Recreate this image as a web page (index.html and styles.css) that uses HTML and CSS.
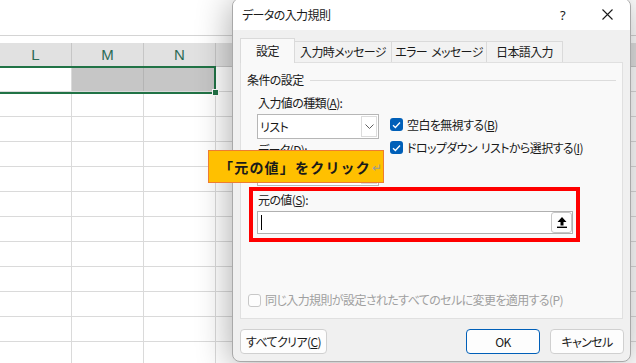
FILE: index.html
```html
<!DOCTYPE html>
<html lang="ja">
<head>
<meta charset="UTF-8">
<meta name="viewport" content="width=device-width, initial-scale=1.0">
<title>データの入力規則</title>
<link rel="stylesheet" href="styles.css">
</head>
<body>

<div class="screen">
  <!-- Excel シート (背景) -->
  <div class="sheet">
    <div class="formula-bar"></div>
    <div class="sheet-row col-head">
      <div class="cell">L</div>
      <div class="cell">M</div>
      <div class="cell">N</div>
      <div class="cell cell-rest"></div>
    </div>
    <div class="sheet-row">
      <div class="cell"></div>
      <div class="cell sel"></div>
      <div class="cell sel"></div>
      <div class="cell cell-rest"></div>
    </div>
    <div class="sheet-row"><div class="cell"></div><div class="cell"></div><div class="cell"></div><div class="cell cell-rest"></div></div>
    <div class="sheet-row"><div class="cell"></div><div class="cell"></div><div class="cell"></div><div class="cell cell-rest"></div></div>
    <div class="sheet-row"><div class="cell"></div><div class="cell"></div><div class="cell"></div><div class="cell cell-rest"></div></div>
    <div class="sheet-row"><div class="cell"></div><div class="cell"></div><div class="cell"></div><div class="cell cell-rest"></div></div>
    <div class="sheet-row"><div class="cell"></div><div class="cell"></div><div class="cell"></div><div class="cell cell-rest"></div></div>
    <div class="sheet-row"><div class="cell"></div><div class="cell"></div><div class="cell"></div><div class="cell cell-rest"></div></div>
    <div class="sheet-row"><div class="cell"></div><div class="cell"></div><div class="cell"></div><div class="cell cell-rest"></div></div>
    <div class="sheet-row"><div class="cell"></div><div class="cell"></div><div class="cell"></div><div class="cell cell-rest"></div></div>
    <div class="sheet-row"><div class="cell"></div><div class="cell"></div><div class="cell"></div><div class="cell cell-rest"></div></div>
    <div class="sheet-row"><div class="cell"></div><div class="cell"></div><div class="cell"></div><div class="cell cell-rest"></div></div>
    <div class="sheet-row"><div class="cell"></div><div class="cell"></div><div class="cell"></div><div class="cell cell-rest"></div></div>

    <div class="selection"><span class="fill-handle"></span></div>
  </div>

  <!-- データの入力規則 ダイアログ -->
  <div class="dialog">
    <div class="titlebar">
      <span class="title">データの入力規則</span>
      <span class="title-btn help">?</span>
      <span class="title-btn">
        <svg width="11" height="11" viewBox="0 0 11 11"><path d="M0.5 0.5 L10.5 10.5 M10.5 0.5 L0.5 10.5" stroke="#1a1a1a" stroke-width="1.1" fill="none"/></svg>
      </span>
    </div>

    <div class="dialog-body">
      <div class="tabs">
        <div class="tab tab-active tab-w1">設定</div>
        <div class="tab tab-w2">入力時メッセージ</div>
        <div class="tab tab-w3">エラー<span class="sp"> </span>メッセージ</div>
        <div class="tab tab-w4">日本語入力</div>
      </div>

      <div class="panel">
        <div class="group-head">条件の設定</div>

        <div class="criteria">
          <div class="crit-left">
            <div class="field-label">入力値の種類(<u>A</u>):</div>
            <div class="combo">
              <span class="combo-text">リスト</span>
              <span class="combo-btn">
                <svg width="9" height="5" viewBox="0 0 9 5"><path d="M0.5 0.5 L4.5 4.5 L8.5 0.5" stroke="#606060" fill="none"/></svg>
              </span>
            </div>
            <div class="field-label label-gap">データ(<u>D</u>):</div>
            <div class="combo">
              <span class="combo-text"></span>
              <span class="combo-btn">
                <svg width="9" height="5" viewBox="0 0 9 5"><path d="M0.5 0.5 L4.5 4.5 L8.5 0.5" stroke="#606060" fill="none"/></svg>
              </span>
            </div>
          </div>
          <div class="crit-right">
            <div class="check-row">
              <span class="checkbox">
                <svg width="9" height="8" viewBox="0 0 9 8"><path d="M1 4.2 L3.4 6.5 L8 1.5" stroke="#fff" stroke-width="1.3" fill="none"/></svg>
              </span>
              <span>空白を無視する(<u>B</u>)</span>
            </div>
            <div class="check-row">
              <span class="checkbox">
                <svg width="9" height="8" viewBox="0 0 9 8"><path d="M1 4.2 L3.4 6.5 L8 1.5" stroke="#fff" stroke-width="1.3" fill="none"/></svg>
              </span>
              <span>ドロップダウン<span class="sp"> </span>リストから選択する(<u>I</u>)</span>
            </div>
          </div>
        </div>

        <div class="source">
          <div class="field-label">元の値(<u>S</u>):</div>
          <div class="source-input">
            <span class="caret"></span>
            <span class="source-space"></span>
            <span class="pick-btn">
              <svg width="10" height="11" viewBox="0 0 10 11"><path d="M5 0 L9.5 5 H6.5 V8.5 H3.5 V5 H0.5 Z" fill="#000"/><rect x="0" y="9.6" width="10" height="1.4" fill="#000"/></svg>
            </span>
          </div>
        </div>

        <div class="apply-row">
          <span class="checkbox checkbox-off"></span>
          <span>同じ入力規則が設定されたすべてのセルに変更を適用する(P)</span>
        </div>

        <div class="red-frame"></div>
      </div>

      <div class="footer">
        <span class="btn btn-clear">すべてクリア(<u>C</u>)</span>
        <span class="footer-space"></span>
        <span class="btn btn-ok">OK</span>
        <span class="btn btn-cancel">キャンセル</span>
      </div>
    </div>
  </div>

  <div class="callout">「元の値」をクリック<span class="para">↵</span></div>
</div>

</body>
</html>
```

FILE: styles.css
```css
* {
  box-sizing: border-box;
}
body {
  margin: 0;
  background-color: #fff;
  font-family: "Noto Sans CJK JP", sans-serif;
  overflow: hidden;
}
.screen {
  position: relative;
  width: 636px;
  height: 363px;
  overflow: hidden;
}

/* シート */
.sheet {
  position: relative;
}
.formula-bar {
  height: 36px;
  border-bottom: 1px solid #d4d4d4;
  margin-bottom: 7px;
}
.sheet-row {
  display: flex;
  height: 25px;
  border-bottom: 1px solid #dadada;
}
.cell {
  flex: none;
  width: 72px;
  border-right: 1px solid #dadada;
}
.cell-rest {
  flex: 1;
  border-right: none;
}
.col-head {
  height: 24px;
  background-color: #e1e1e1;
  border-bottom-color: #c8c8c8;
}
.col-head .cell {
  border-right-color: #c6c6c6;
  text-align: center;
  font-family: "Liberation Sans", sans-serif;
  font-size: 15px;
  line-height: 23px;
  color: #2b6b55;
}
.sel {
  background-color: #c6c6c6;
  border-right-color: #b4b4b4;
}
.selection {
  position: absolute;
  left: -3px;
  top: 66px;
  width: 219px;
  height: 28px;
  border: 2px solid #217346;
}
.fill-handle {
  position: absolute;
  right: -5px;
  bottom: -4px;
  width: 7px;
  height: 7px;
  background-color: #217346;
  border: 1px solid #fff;
}

/* ダイアログ */
.dialog {
  position: absolute;
  left: 232px;
  top: -2px;
  width: 399px;
  height: 364px;
  background-color: #f0f0f0;
  border: 1px solid #a9a9a9;
  border-radius: 8px;
  box-shadow: -2px 3px 34px rgba(0, 0, 0, 0.32);
  display: flex;
  flex-direction: column;
  overflow: hidden;
  font-size: 12px;
  line-height: 16px;
  letter-spacing: -0.6px;
  color: #1a1a1a;
  font-feature-settings: "palt";
}
.sp {
  display: inline-block;
  width: 4px;
}
.titlebar {
  height: 31px;
  background-color: #fff;
  display: flex;
  align-items: center;
  padding-left: 9px;
}
.title {
  flex: 1;
}
.title-btn {
  width: 45px;
  height: 31px;
  display: flex;
  align-items: center;
  justify-content: center;
}
.help {
  font-family: "Noto Sans", sans-serif;
  font-size: 13px;
}
.dialog-body {
  flex: 1;
  padding: 8px 7px 0 7px;
  display: flex;
  flex-direction: column;
}
.tabs {
  display: flex;
  align-items: flex-end;
  height: 24px;
}
.tab {
  height: 21px;
  margin-left: -1px;
  border: 1px solid #dadada;
  border-bottom: none;
  background-color: #f2f2f2;
  display: flex;
  align-items: center;
  justify-content: center;
}
.tab-active {
  height: 25px;
  margin-left: 0;
  margin-bottom: -1px;
  background-color: #f9f9f9;
  position: relative;
  z-index: 1;
}
.tab-w1 { width: 55px; }
.tab-w2 { width: 98px; }
.tab-w3 { width: 96px; }
.tab-w4 { width: 77px; }

.panel {
  position: relative;
  height: 257px;
  background-color: #f9f9f9;
  border: 1px solid #e0e0e0;
  padding: 9px 6px 10px 6px;
  display: flex;
  flex-direction: column;
}
.group-head {
  display: flex;
  align-items: center;
  gap: 6px;
}
.group-head::after {
  content: "";
  flex: 1;
  height: 1px;
  background-color: #dcdcdc;
}
.criteria {
  display: flex;
  gap: 11px;
  margin: 7px 0 0 10px;
}
.crit-left {
  width: 122px;
}
.field-label {
  padding-left: 1px;
}
.label-gap {
  margin-top: 3px;
}
.combo {
  height: 25px;
  margin-top: 3px;
  border: 1px solid #b6b6b6;
  background-color: #fff;
  display: flex;
}
.combo-text {
  flex: 1;
  padding-left: 2px;
  line-height: 23px;
}
.combo-btn {
  width: 16px;
  margin: 1px;
  border: 1px solid #dcdcdc;
  display: flex;
  align-items: center;
  justify-content: center;
}
.crit-right {
  padding-top: 18px;
}
.check-row {
  height: 23px;
  display: flex;
  align-items: center;
  gap: 4px;
}
.checkbox {
  width: 13px;
  height: 13px;
  border-radius: 3px;
  background-color: #005fb8;
  display: flex;
  align-items: center;
  justify-content: center;
}
.checkbox-off {
  background-color: #fdfdfd;
  border: 1px solid #c8c8c8;
}
.source {
  margin: 6px 0 0 10px;
}
.source-input {
  width: 316px;
  height: 23px;
  margin-top: 3px;
  border: 1px solid #b0b0b0;
  background-color: #fff;
  display: flex;
  align-items: center;
  padding-left: 3px;
}
.caret {
  width: 1px;
  height: 15px;
  background-color: #000;
}
.source-space {
  flex: 1;
}
.pick-btn {
  width: 21px;
  height: 21px;
  border: 1px solid #c6c6c6;
  border-radius: 3px;
  background-color: #fdfdfd;
  display: flex;
  align-items: center;
  justify-content: center;
}
.apply-row {
  margin-top: auto;
  padding-left: 1px;
  display: flex;
  align-items: center;
  gap: 4px;
  color: #a0a0a0;
}
.red-frame {
  position: absolute;
  left: 8px;
  top: 124px;
  width: 331px;
  height: 55px;
  border: 4px solid #ff0000;
  pointer-events: none;
}
.footer {
  display: flex;
  margin-top: 10px;
  margin-right: -1px;
}
.footer-space {
  flex: 1;
}
.btn {
  height: 25px;
  border: 1px solid #d0d0d0;
  border-radius: 4px;
  background-color: #fdfdfd;
  display: flex;
  align-items: center;
  justify-content: center;
}
.btn-clear { width: 87px; }
.btn-ok {
  width: 74px;
  border-color: #005fb8;
}
.btn-cancel {
  width: 74px;
  margin-left: 10px;
}

/* 注釈 */
.callout {
  position: absolute;
  left: 208px;
  top: 150px;
  width: 176px;
  height: 33px;
  background-color: #ffc000;
  border: 1px solid #ed7d31;
  padding-left: 10px;
  display: flex;
  align-items: center;
  font-size: 14px;
  font-weight: bold;
  letter-spacing: 1.2px;
  color: #1a1a1a;
}
.para {
  color: #9a9a9a;
  font-weight: normal;
  font-size: 12px;
  letter-spacing: 0;
  margin-left: 1px;
}
```
